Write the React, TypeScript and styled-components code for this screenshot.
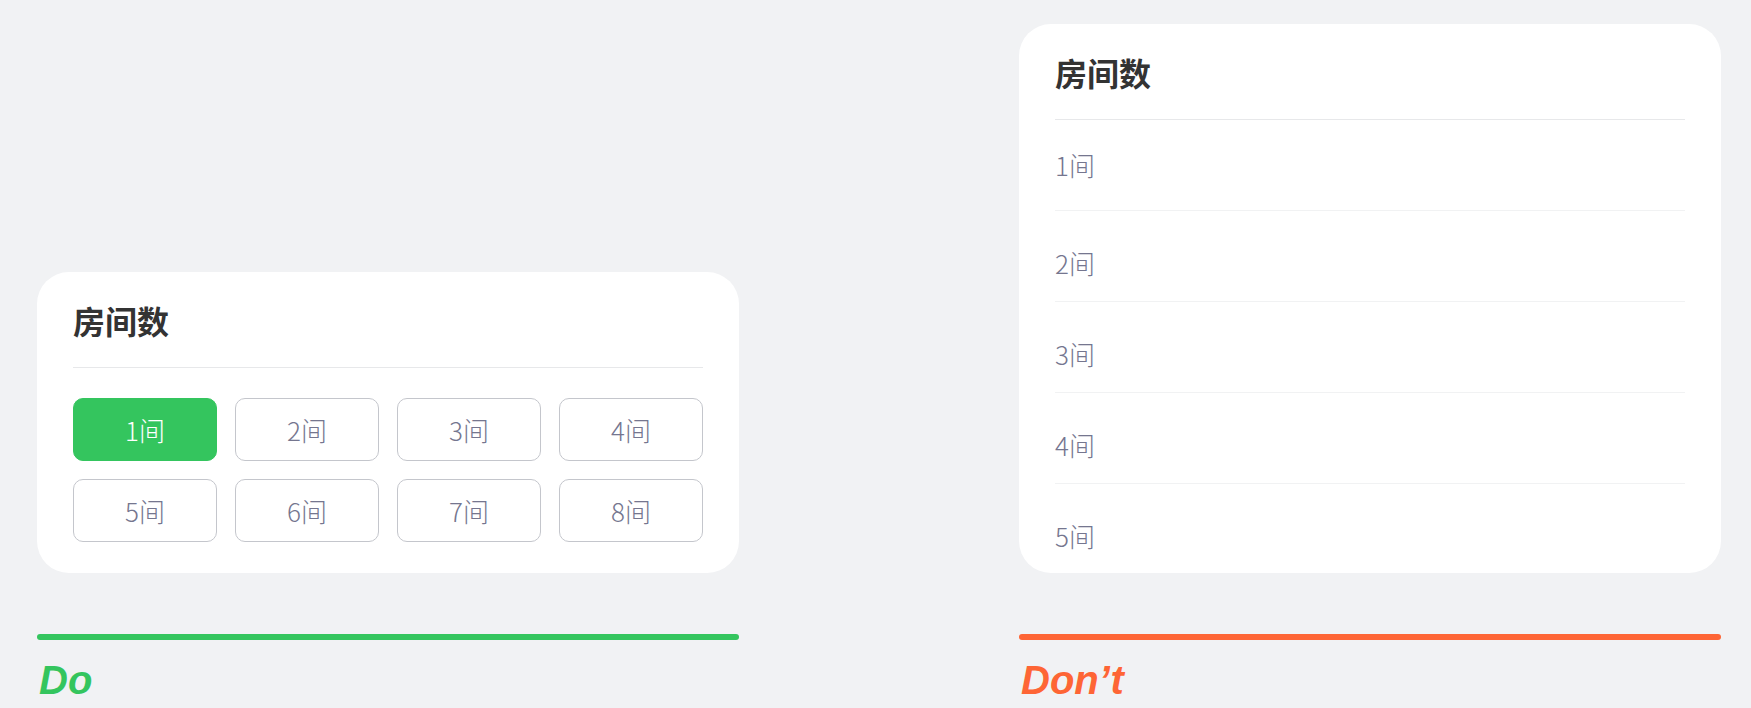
import React from "react";
import styled, { createGlobalStyle } from "styled-components";

const GlobalStyle = createGlobalStyle`
  html, body {
    margin: 0;
    padding: 0;
    background: #f1f2f4;
  }
  body {
    font-family: "Noto Sans CJK SC", "Noto Sans", sans-serif;
  }
  * { box-sizing: border-box; }
`;

const Page = styled.div`
  width: 1751px;
  height: 708px;
  padding: 24px 30px 0 37px;
  display: flex;
  align-items: flex-end;
  gap: 280px;
  background: #f1f2f4;
  overflow: hidden;
`;

const Column = styled.div`
  width: 702px;
  display: flex;
  flex-direction: column;
  padding-bottom: 4px;
`;

const Card = styled.div<{ $height: number }>`
  height: ${(p) => p.$height}px;
  background: #ffffff;
  border-radius: 32px;
  padding: 0 36px;
  overflow: hidden;
  display: flex;
  flex-direction: column;
`;

const Header = styled.div`
  padding-top: 27px;
  padding-bottom: 26px;
  border-bottom: 1px solid #e7e8ea;
`;

const Title = styled.h3`
  margin: 0;
  font-size: 32px;
  line-height: 42px;
  font-weight: 600;
  color: #333333;
  font-family: "Noto Sans CJK SC", sans-serif;
`;

const OptionGrid = styled.div`
  margin-top: 30px;
  display: grid;
  grid-template-columns: repeat(4, 1fr);
  gap: 18px;
`;

const OptionButton = styled.button<{ $active?: boolean }>`
  height: 63px;
  border-radius: 10px;
  border: 1px solid ${(p) => (p.$active ? "#34c55e" : "#c4c6cc")};
  background: ${(p) => (p.$active ? "#34c55e" : "#ffffff")};
  color: ${(p) => (p.$active ? "#ffffff" : "#75768f")};
  font-family: "Noto Sans CJK SC", sans-serif;
  font-size: 26px;
  font-weight: 300;
  line-height: 1;
  padding: 0;
  display: flex;
  align-items: center;
  justify-content: center;
`;

const List = styled.div`
  display: flex;
  flex-direction: column;
`;

const ListItem = styled.div`
  padding: 34px 0 20px;
  border-bottom: 1px solid #f1f2f3;
  font-size: 26px;
  line-height: 36px;
  font-weight: 300;
  color: #75768f;
  font-family: "Noto Sans CJK SC", sans-serif;

  &:first-child {
    padding-top: 27px;
    padding-bottom: 27px;
  }

  &:last-child {
    border-bottom: none;
  }
`;

const Bar = styled.div<{ $color: string }>`
  margin-top: 61px;
  height: 6px;
  border-radius: 3px;
  background: ${(p) => p.$color};
`;

const Verdict = styled.div<{ $color: string }>`
  margin-top: 16px;
  font-family: "Liberation Sans", Arial, sans-serif;
  font-style: italic;
  font-weight: 700;
  font-size: 40px;
  line-height: 48px;
  color: ${(p) => p.$color};
  padding-left: 2px;
`;

const GREEN = "#34c55e";
const ORANGE = "#fe6535";

export default function App() {
  const grid = [1, 2, 3, 4, 5, 6, 7, 8];
  const list = [1, 2, 3, 4, 5];
  return (
    <>
      <GlobalStyle />
      <Page>
        <Column>
          <Card $height={301}>
            <Header>
              <Title>房间数</Title>
            </Header>
            <OptionGrid>
              {grid.map((n) => (
                <OptionButton key={n} $active={n === 1}>
                  {n}间
                </OptionButton>
              ))}
            </OptionGrid>
          </Card>
          <Bar $color={GREEN} />
          <Verdict $color={GREEN}>Do</Verdict>
        </Column>
        <Column>
          <Card $height={549}>
            <Header>
              <Title>房间数</Title>
            </Header>
            <List>
              {list.map((n) => (
                <ListItem key={n}>{n}间</ListItem>
              ))}
            </List>
          </Card>
          <Bar $color={ORANGE} />
          <Verdict $color={ORANGE}>Don’t</Verdict>
        </Column>
      </Page>
    </>
  );
}
